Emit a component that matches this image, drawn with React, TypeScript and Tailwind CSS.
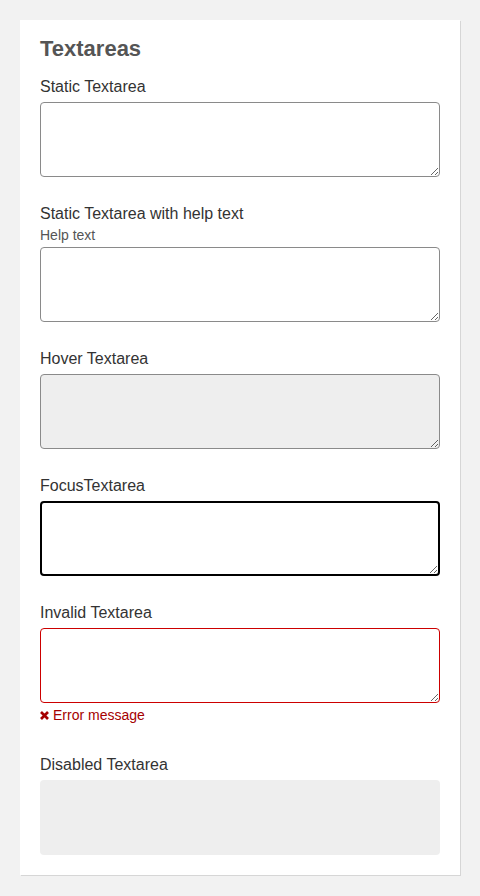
import { ReactNode } from 'react';

type FieldProps = {
  label: string;
  help?: string;
  children: ReactNode;
  className?: string;
};

const Field = ({ label, help, children, className = '' }: FieldProps) => (
  <div className={`flex flex-col ${className}`}>
    <label className="text-[16px] leading-[20px] text-[#333]">{label}</label>
    {help ? (
      <span className="mt-[1px] mb-[2px] text-[14px] leading-[20px] text-[#555]">{help}</span>
    ) : (
      <div className="h-[5px]" />
    )}
    {children}
  </div>
);

const base = 'block w-full h-[75px] rounded-[4px] outline-none';

export default function App() {
  return (
    <div className="min-h-[896px] bg-[#f2f2f2] pt-[20px] pl-[20px] font-['Liberation_Sans',Arial,sans-serif]">
      <div className="w-[440px] bg-white px-[20px] pt-[18px] pb-[20px] shadow-[1px_1px_0_#d6d6d6]">
        <h2 className="text-[22px] leading-[22px] font-bold text-[#555]">Textareas</h2>

        <Field label="Static Textarea" className="mt-[17px]">
          <textarea className={`${base} border border-[#8a8a8a] bg-white`} />
        </Field>

        <Field label="Static Textarea with help text" help="Help text" className="mt-[27px]">
          <textarea className={`${base} border border-[#8a8a8a] bg-white`} />
        </Field>

        <Field label="Hover Textarea" className="mt-[27px]">
          <textarea className={`${base} border border-[#8a8a8a] bg-[#eeeeee]`} />
        </Field>

        <Field label="FocusTextarea" className="mt-[27px]">
          <textarea className={`${base} border-2 border-black bg-white`} />
        </Field>

        <Field label="Invalid Textarea" className="mt-[27px]">
          <textarea className={`${base} border border-[#cc0000] bg-white`} />
          <div className="mt-[2px] flex items-center gap-[4px] text-[14px] leading-[20px] text-[#a50000]">
            <svg width="9" height="9" viewBox="0 0 9 9" className="shrink-0">
              <path d="M1 1 L8 8 M8 1 L1 8" stroke="#a50000" strokeWidth="2.7" strokeLinecap="butt" />
            </svg>
            <span>Error message</span>
          </div>
        </Field>

        <Field label="Disabled Textarea" className="mt-[30px]">
          <textarea disabled className={`${base} resize-none border-0 bg-[#eeeeee]`} />
        </Field>
      </div>
    </div>
  );
}
